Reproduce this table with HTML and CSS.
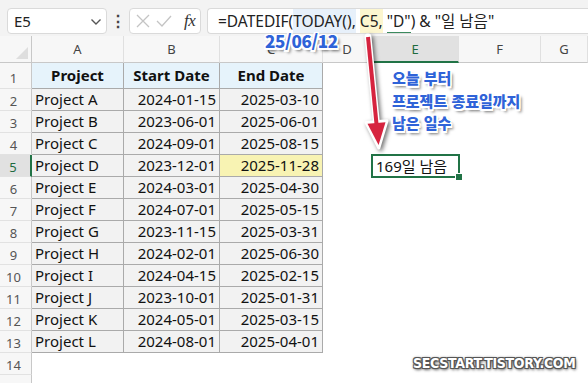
FILE: index.html
```html
<!DOCTYPE html>
<html lang="ko">
<head>
<meta charset="utf-8">
<link rel="stylesheet" href="styles.css">
</head>
<body>
<div class="app">
  <div class="toolbar">
    <div class="namebox"><span>E5</span>
      <svg class="chev" width="12" height="8" viewBox="0 0 12 8"><path d="M1.5 1.5 L6 6 L10.5 1.5" fill="none" stroke="#555" stroke-width="1.4"/></svg>
    </div>
    <div class="dots">⋮</div>
    <div class="fxbox">
      <svg width="14" height="14" viewBox="0 0 14 14"><path d="M1 1 L13 13 M13 1 L1 13" stroke="#c4c4c4" stroke-width="1.3" fill="none"/></svg>
      <svg width="16" height="14" viewBox="0 0 16 14"><path d="M1 7 L6 12 L15 2" stroke="#c4c4c4" stroke-width="1.3" fill="none"/></svg>
      <span class="fx">fx</span>
    </div>
    <div class="formula">=DATEDIF(<span class="hl-blue">TODAY(),</span> <span class="hl-yellow">C5,</span> <span class="ul">"D"</span>) &amp; "일 남음"</div>
  </div>

  <div class="grid">
    <div class="corner"></div>
    <div class="ch">A</div><div class="ch">B</div><div class="ch">C</div><div class="ch">D</div><div class="ch sel">E</div><div class="ch">F</div><div class="ch">G</div>

    <div class="rh r1">1</div>
    <div class="th">Project</div><div class="th">Start Date</div><div class="th">End Date</div><div class="e"></div><div class="e"></div><div class="e"></div><div class="e"></div>

    <div class="rh">2</div><div class="td">Project A</div><div class="td n">2024-01-15</div><div class="td n">2025-03-10</div><div class="e"></div><div class="e"></div><div class="e"></div><div class="e"></div>
    <div class="rh">3</div><div class="td">Project B</div><div class="td n">2023-06-01</div><div class="td n">2025-06-01</div><div class="e"></div><div class="e"></div><div class="e"></div><div class="e"></div>
    <div class="rh">4</div><div class="td">Project C</div><div class="td n">2024-09-01</div><div class="td n">2025-08-15</div><div class="e"></div><div class="e"></div><div class="e"></div><div class="e"></div>
    <div class="rh sel">5</div><div class="td">Project D</div><div class="td n">2023-12-01</div><div class="td n ref">2025-11-28</div><div class="e"></div><div class="e active">169일 남음</div><div class="e"></div><div class="e"></div>
    <div class="rh">6</div><div class="td">Project E</div><div class="td n">2024-03-01</div><div class="td n">2025-04-30</div><div class="e"></div><div class="e"></div><div class="e"></div><div class="e"></div>
    <div class="rh">7</div><div class="td">Project F</div><div class="td n">2024-07-01</div><div class="td n">2025-05-15</div><div class="e"></div><div class="e"></div><div class="e"></div><div class="e"></div>
    <div class="rh">8</div><div class="td">Project G</div><div class="td n">2023-11-15</div><div class="td n">2025-03-31</div><div class="e"></div><div class="e"></div><div class="e"></div><div class="e"></div>
    <div class="rh">9</div><div class="td">Project H</div><div class="td n">2024-02-01</div><div class="td n">2025-06-30</div><div class="e"></div><div class="e"></div><div class="e"></div><div class="e"></div>
    <div class="rh">10</div><div class="td">Project I</div><div class="td n">2024-04-15</div><div class="td n">2025-02-15</div><div class="e"></div><div class="e"></div><div class="e"></div><div class="e"></div>
    <div class="rh">11</div><div class="td">Project J</div><div class="td n">2023-10-01</div><div class="td n">2025-01-31</div><div class="e"></div><div class="e"></div><div class="e"></div><div class="e"></div>
    <div class="rh">12</div><div class="td">Project K</div><div class="td n">2024-05-01</div><div class="td n">2025-03-15</div><div class="e"></div><div class="e"></div><div class="e"></div><div class="e"></div>
    <div class="rh">13</div><div class="td">Project L</div><div class="td n">2024-08-01</div><div class="td n">2025-04-01</div><div class="e"></div><div class="e"></div><div class="e"></div><div class="e"></div>
    <div class="rh">14</div><div class="e"></div><div class="e"></div><div class="e"></div><div class="e"></div><div class="e"></div><div class="e"></div><div class="e"></div>
    <div class="rh"></div><div class="e"></div><div class="e"></div><div class="e"></div><div class="e"></div><div class="e"></div><div class="e"></div><div class="e"></div>
  </div>

  <svg class="arrow" width="588" height="383" viewBox="0 0 588 383">
    <g class="arrow-shadow">
      <path d="M368 37 L376.5 124" stroke="#fff" stroke-width="7" fill="none" stroke-linecap="round"/>
      <polygon points="366,122.5 387,120.8 378.8,148" fill="#fff" stroke="#fff" stroke-width="3" stroke-linejoin="round"/>
      <path d="M368 37 L376.5 124" stroke="#d6243f" stroke-width="4" fill="none"/>
      <polygon points="367.5,123.8 385.5,122.2 378.6,145" fill="#d6243f"/>
    </g>
  </svg>

  <div class="note-date">25/06/12</div>
  <div class="note-ko">오늘 부터<br>프로젝트 종료일까지<br>남은 일수</div>
  <div class="watermark">SECSTART.TISTORY.COM</div>
</div>
</body>
</html>
```

FILE: styles.css
```css
* { box-sizing: border-box; }
html, body { margin: 0; padding: 0; }
body {
  width: 588px;
  height: 383px;
  overflow: hidden;
  background: #ffffff;
  font-family: "Noto Sans", "Noto Sans CJK KR", sans-serif;
  color: #111;
}
.app { position: relative; width: 588px; height: 383px; overflow: hidden; }

.toolbar {
  height: 36px;
  background: #f3f3f3;
  display: flex;
  align-items: flex-start;
  padding: 8px 0 0 7px;
}
.namebox {
  width: 100px;
  height: 26px;
  background: #fff;
  border: 1px solid #dadada;
  border-radius: 4px;
  display: flex;
  align-items: center;
  justify-content: space-between;
  padding: 0 4px 0 6px;
  font-size: 15px;
  color: #222;
}
.chev { margin-top: 2px; }
.dots {
  width: 22px;
  text-align: center;
  font-size: 16px;
  line-height: 26px;
  color: #444;
  font-weight: bold;
}
.fxbox {
  width: 72px;
  height: 26px;
  background: #fff;
  border: 1px solid #dadada;
  border-radius: 4px;
  display: flex;
  align-items: center;
  gap: 6px;
  padding: 0 0 0 6px;
}
.fx {
  font-family: "Liberation Serif", serif;
  font-style: italic;
  font-size: 17px;
  color: #333;
  margin-left: 6px;
  letter-spacing: -0.5px;
}
.formula {
  flex: 1;
  margin-left: 6px;
  height: 26px;
  background: #fff;
  border: 1px solid #dadada;
  border-right: none;
  border-radius: 4px 0 0 4px;
  padding-left: 10px;
  font-size: 15.5px;
  line-height: 24px;
  color: #222;
  white-space: nowrap;
  overflow: hidden;
}
.hl-blue { display: inline-block; background: #e7f0fa; line-height: 24px; }
.hl-yellow { display: inline-block; background: #fcf6cf; line-height: 24px; }
.ul { display: inline-block; line-height: 22px; border-bottom: 2px solid #3b8a5e; }

.grid {
  display: grid;
  grid-template-columns: 32px 92px 96px 103px 49px 87px 82px 47px;
  grid-template-rows: 27px 26px repeat(13, 22px) 22px;
}
.corner {
  background: #f7f7f7;
  border-right: 1px solid #c8c8c8;
  border-bottom: 1px solid #c8c8c8;
  position: relative;
}
.corner::after {
  content: "";
  position: absolute;
  right: 3px;
  bottom: 3px;
  width: 0; height: 0;
  border-left: 12px solid transparent;
  border-bottom: 12px solid #dedede;
}
.ch {
  background: #f7f7f7;
  border-right: 1px solid #e0e0e0;
  border-bottom: 1px solid #c8c8c8;
  font-size: 13px;
  color: #444;
  text-align: center;
  line-height: 26px;
}
.ch.sel {
  background: #e1e1e1;
  color: #1e6b3f;
  border-bottom: 2px solid #217346;
}
.rh {
  background: #f7f7f7;
  border-right: 1px solid #c8c8c8;
  border-bottom: 1px solid #e2e2e2;
  font-size: 13px;
  color: #555;
  text-align: center;
  line-height: 24px;
  padding-right: 4px;
}
.rh.r1 { line-height: 30px; }
.rh.sel {
  background: #e1e1e1;
  color: #1e6b3f;
  border-right: 2px solid #217346;
}
.th {
  background: #e6f3fb;
  border-right: 1px solid #aaaaaa;
  border-bottom: 1px solid #aaaaaa;
  font-weight: bold;
  font-size: 15px;
  text-align: center;
  line-height: 25px;
  color: #111;
}
.td {
  background: #f2f2f2;
  border-right: 1px solid #aaaaaa;
  border-bottom: 1px solid #aaaaaa;
  font-size: 15px;
  line-height: 21px;
  padding: 0 3px;
  color: #111;
  white-space: nowrap;
}
.td.n { text-align: right; }
.td.ref { background: #f8f3b3; }
.e { background: #fff; }
.active {
  position: relative;
  outline: 2px solid #217346;
  outline-offset: -1px;
  font-size: 15px;
  line-height: 22px;
  padding-left: 4px;
  color: #111;
  white-space: nowrap;
}
.active::after {
  content: "";
  position: absolute;
  right: -4px;
  bottom: -4px;
  width: 6px;
  height: 6px;
  background: #217346;
  border: 1px solid #fff;
}

.arrow { position: absolute; left: 0; top: 0; pointer-events: none; }
.arrow-shadow { filter: drop-shadow(2px 2px 2px rgba(0,0,0,0.55)); }

.note-date, .note-ko {
  position: absolute;
  font-family: "Noto Sans CJK KR", "Noto Sans", sans-serif;
  font-weight: 900;
  color: #2f63d8;
  text-shadow:
    -1.5px -1.5px 0 #fff, 1.5px -1.5px 0 #fff, -1.5px 1.5px 0 #fff, 1.5px 1.5px 0 #fff,
    0 -1.5px 0 #fff, 0 1.5px 0 #fff, -1.5px 0 0 #fff, 1.5px 0 0 #fff,
    2.5px 2.5px 3px rgba(0,0,0,0.6);
}
.note-date {
  left: 265px;
  top: 31px;
  font-size: 17px;
  line-height: 20px;
  letter-spacing: -0.3px;
}
.note-ko {
  left: 392px;
  top: 67px;
  font-size: 15px;
  line-height: 22.5px;
}
.watermark {
  position: absolute;
  left: 413px;
  top: 355px;
  font-family: "DejaVu Sans Condensed", "DejaVu Sans", sans-serif;
  font-stretch: condensed;
  font-weight: bold;
  font-size: 14px;
  letter-spacing: -0.3px;
  color: #fff;
  text-shadow:
    -1px -1px 0 #555, 1px -1px 0 #555, -1px 1px 0 #555, 1px 1px 0 #555,
    0 0 3px #333, 1px 2px 3px rgba(0,0,0,0.6);
}
```
